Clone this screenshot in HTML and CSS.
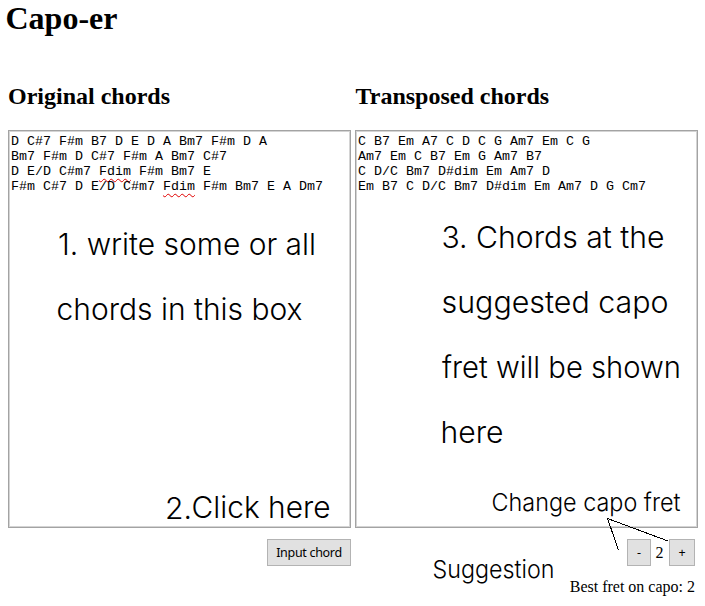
FILE: index.html
```html
<!DOCTYPE html>
<html lang="en">
<head>
<meta charset="utf-8">
<title>Capo-er</title>
<link rel="stylesheet" href="styles.css">
</head>
<body>
<h1>Capo-er</h1>
<main class="columns">
  <section>
    <h2>Original chords</h2>
    <div class="box">
      <div>D C#7 F#m B7 D E D A Bm7 F#m D A</div>
      <div>Bm7 F#m D C#7 F#m A Bm7 C#7</div>
      <div class="line"><span>D E/D C#m7 </span><span class="typo">Fdim</span><span> F#m Bm7 E</span></div>
      <div class="line"><span>F#m C#7 D E/D C#m7 </span><span class="typo">Fdim</span><span> F#m Bm7 E A Dm7</span></div>
    </div>
    <div class="controls"><button class="submit">Input chord</button></div>
  </section>
  <section>
    <h2>Transposed chords</h2>
    <div class="box">
      <div>C B7 Em A7 C D C G Am7 Em C G</div>
      <div>Am7 Em C B7 Em G Am7 B7</div>
      <div>C D/C Bm7 D#dim Em Am7 D</div>
      <div>Em B7 C D/C Bm7 D#dim Em Am7 D G Cm7</div>
    </div>
    <div class="controls fret"><button class="minus">-</button><span class="value">2</span><button class="plus">+</button></div>
    <p class="best">Best fret on capo: 2</p>
  </section>
</main>
<svg class="notes" width="705" height="606" viewBox="0 0 705 606">
  <g font-size="30">
    <text x="58" y="255" textLength="258" lengthAdjust="spacingAndGlyphs">1. write some or all</text>
    <text x="56.500" y="320" textLength="246" lengthAdjust="spacingAndGlyphs">chords in this box</text>
    <text x="165" y="519" textLength="27" lengthAdjust="spacingAndGlyphs">2.</text>
    <text x="191.500" y="518" textLength="139" lengthAdjust="spacingAndGlyphs">Click here</text>
    <text x="441.500" y="248" textLength="223" lengthAdjust="spacingAndGlyphs">3. Chords at the</text>
    <text x="441.500" y="313" textLength="227" lengthAdjust="spacingAndGlyphs">suggested capo</text>
    <text x="442" y="378" textLength="239" lengthAdjust="spacingAndGlyphs">fret will be shown</text>
    <text x="440.500" y="443" textLength="63" lengthAdjust="spacingAndGlyphs">here</text>
  </g>
  <g font-size="24.500">
    <text x="491.500" y="511" textLength="189" lengthAdjust="spacingAndGlyphs">Change capo fret</text>
    <text x="432.500" y="578" textLength="122" lengthAdjust="spacingAndGlyphs">Suggestion</text>
  </g>
  <path class="pointer" d="M618.500 550L607.500 518.500L668 541"/>
</svg>
</body>
</html>
```
FILE: styles.css
```css
body {
  margin: 0;
  padding: 0 7px 0 8px;
  height: 606px;
  box-sizing: border-box;
  position: relative;
  overflow: hidden;
  background: #fff;
  color: #000;
  font: 16px/18px "Liberation Serif", serif;
}
h1 {
  margin: 0 0 0 -2.500px;
  font-size: 32px;
  line-height: 36px;
}
.columns {
  display: grid;
  grid-template-columns: 343px 343px;
  column-gap: 4px;
  padding-top: 47px;
}
h2 {
  margin: 0 0 20px;
  font-size: 24px;
  line-height: 27px;
}
section + section h2 {
  padding-left: 0.500px;
}
.box {
  height: 398px;
  box-sizing: border-box;
  border: 1px solid #a3a3a3;
  box-shadow: inset 0 0 0 1px #d4d4d4;
  padding: 3px 2px 0;
  font: 13.333px/15px "Liberation Mono", monospace;
}
.line {
  display: flex;
  white-space: pre;
}
.typo {
  text-decoration: underline wavy #e00000 1px;
  text-underline-offset: 3px;
  text-decoration-skip-ink: none;
}
.controls {
  display: flex;
  justify-content: flex-end;
  align-items: center;
  height: 27px;
  margin-top: 11px;
}
.fret {
  padding-right: 3px;
}
button {
  height: 27px;
  padding: 0;
  border: 1px solid #b3b3b3;
  background: #e1e1e1;
  color: #000;
  font: 12.500px "Noto Sans", sans-serif;
}
.submit {
  width: 84px;
  letter-spacing: -0.300px;
}
.minus {
  width: 24px;
}
.plus {
  width: 26px;
}
.value {
  width: 18px;
  text-align: center;
  text-indent: -1px;
}
.best {
  margin: 12px 3px 0 0;
  text-align: right;
}
.notes {
  position: absolute;
  left: 0;
  top: 0;
  font-family: Inter, "Liberation Sans", sans-serif;
  font-weight: 300;
}
.pointer {
  fill: none;
  stroke: #000;
  stroke-width: 1;
  shape-rendering: crispEdges;
}
```
